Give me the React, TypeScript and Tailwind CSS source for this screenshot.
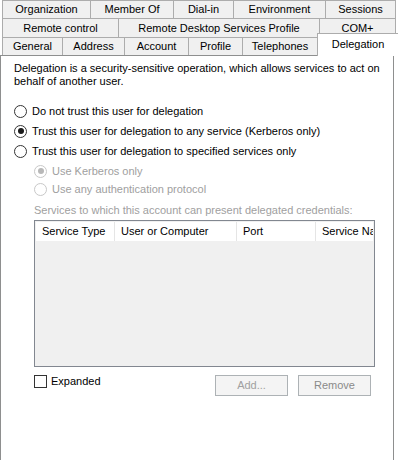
import React from "react";

const row1 = [
  { label: "Organization", w: "w-[89px]" },
  { label: "Member Of", w: "w-[84px]" },
  { label: "Dial-in", w: "w-[61px]" },
  { label: "Environment", w: "w-[93px]" },
  { label: "Sessions", w: "w-[71px]" },
];
const row2 = [
  { label: "Remote control", w: "w-[117px]" },
  { label: "Remote Desktop Services Profile", w: "w-[202px]" },
  { label: "COM+", w: "w-[77px]" },
];
const row3 = [
  { label: "General", w: "w-[61px]" },
  { label: "Address", w: "w-[63px]" },
  { label: "Account", w: "w-[65px]" },
  { label: "Profile", w: "w-[55px]" },
  { label: "Telephones", w: "w-[76px]" },
];

function Tab({ label, w, h }: { label: string; w: string; h: string }) {
  return (
    <div className={`${w} ${h} shrink-0 border border-b-0 border-[#acacac] bg-[#f0f0f0] -ml-px first:ml-0 flex items-center justify-center text-black`}>
      {label}
    </div>
  );
}

function Radio({ checked, disabled, label, h }: { checked?: boolean; disabled?: boolean; label: string; h: string }) {
  return (
    <div className={`flex items-center ${h}`}>
      <span
        className={`w-[13px] h-[13px] rounded-full border flex items-center justify-center bg-white ${disabled ? "border-[#c8c8c8]" : "border-[#333333]"}`}
      >
        {checked && <span className={`w-[6px] h-[6px] rounded-full ${disabled ? "bg-[#b8b8b8]" : "bg-[#1a1a1a]"}`} />}
      </span>
      <span className={`ml-[5px] ${disabled ? "text-[#a0a0a0]" : "text-black"}`}>{label}</span>
    </div>
  );
}

export default function App() {
  return (
    <div
      className="w-[398px] h-[460px] bg-white overflow-hidden text-[11px] leading-[13px]"
      style={{ fontFamily: '"Liberation Sans", Arial, sans-serif' }}
    >
      <div className="pl-[2px]">
        <div className="flex">{row1.map((t) => <Tab key={t.label} {...t} h="h-[18px]" />)}</div>
        <div className="flex">{row2.map((t) => <Tab key={t.label} {...t} h="h-[19px]" />)}</div>
        <div className="flex items-end h-[18px]">
          {row3.map((t) => <Tab key={t.label} {...t} h="h-[18px]" />)}
          <div className="relative z-10 w-[82px] h-[23px] -ml-px -mb-px shrink-0 border border-b-0 border-[#acacac] bg-white flex items-start justify-center pt-[4px] text-black">
            Delegation
          </div>
        </div>
      </div>
      <div className="w-[394px] h-[410px] border border-[#8e8f8f] bg-white pl-[13px] pt-[6px] text-black">
        <p className="pr-[2px]">
          Delegation is a security-sensitive operation, which allows services to act on behalf of another user.
        </p>
        <div className="mt-[13px]">
          <Radio h="h-[20px]" label="Do not trust this user for delegation" />
          <Radio h="h-[20px]" checked label="Trust this user for delegation to any service (Kerberos only)" />
          <Radio h="h-[20px]" label="Trust this user for delegation to specified services only" />
          <div className="pl-[20px] mt-[1px]">
            <Radio h="h-[18px]" checked disabled label="Use Kerberos only" />
            <Radio h="h-[18px]" disabled label="Use any authentication protocol" />
          </div>
        </div>
        <div className="pl-[20px]">
          <div className="mt-[6px] text-[#a0a0a0]">Services to which this account can present delegated credentials:</div>
          <div className="mt-[3px] w-[341px] h-[147px] border border-[#828790] bg-[#f0f0f0] p-[1px] overflow-hidden">
            <div className="flex h-[19px] bg-white">
              <div className="w-[79px] shrink-0 border-r border-[#e5e5e5] pl-[6px] flex items-center">Service Type</div>
              <div className="w-[122px] shrink-0 border-r border-[#e5e5e5] pl-[6px] flex items-center">User or Computer</div>
              <div className="w-[79px] shrink-0 border-r border-[#e5e5e5] pl-[6px] flex items-center">Port</div>
              <div className="w-[57px] shrink-0 pl-[6px] flex items-center whitespace-nowrap overflow-hidden">Service Name</div>
            </div>
          </div>
          <div className="mt-[8px] flex items-start">
            <div className="flex items-center">
              <span className="w-[13px] h-[13px] border border-[#333333] bg-white" />
              <span className="ml-[4px]">Expanded</span>
            </div>
            <div className="ml-auto mr-[22px] flex gap-[10px]">
              <div className="w-[73px] h-[21px] border border-[#adb2b5] bg-[#f4f4f4] text-[#a0a0a0] flex items-center justify-center">Add...</div>
              <div className="w-[73px] h-[21px] border border-[#adb2b5] bg-[#f4f4f4] text-[#8a8a8a] flex items-center justify-center">Remove</div>
            </div>
          </div>
        </div>
      </div>
    </div>
  );
}
